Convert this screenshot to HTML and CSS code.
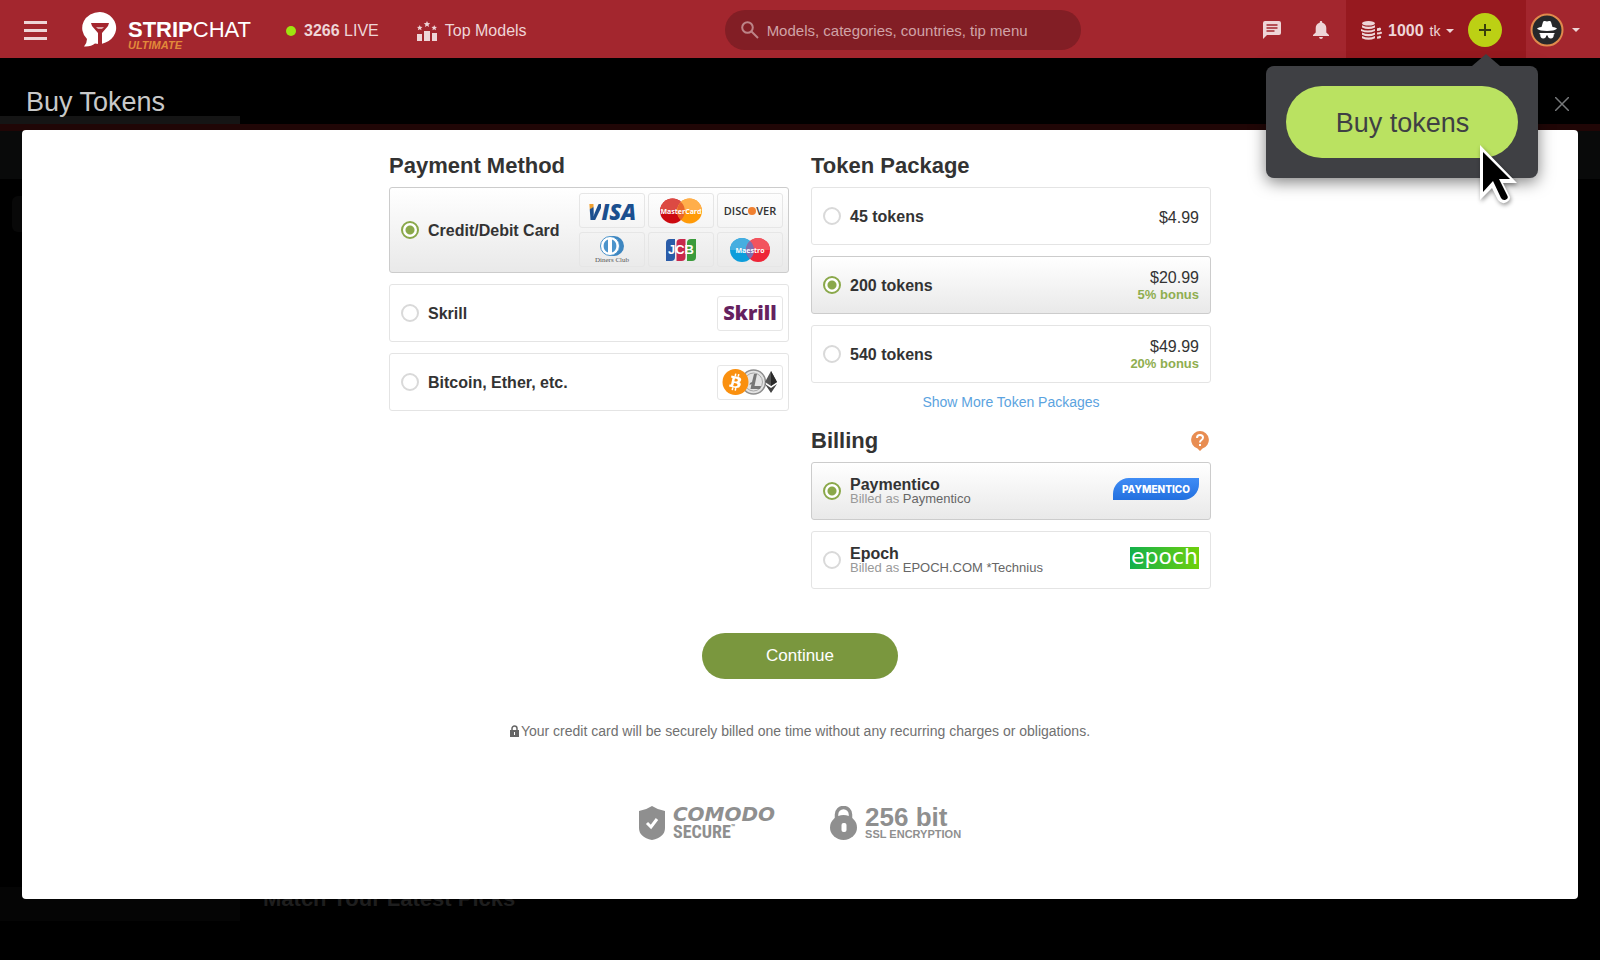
FILE: index.html
```html
<!DOCTYPE html>
<html lang="en">
<head>
	<meta charset="UTF-8">
	<title>Buy Tokens</title>
	<link rel="stylesheet" href="styles.css">
</head>
<body>
	<header class="header">
		<button type="button" class="menu-btn" aria-label="Menu"><span></span><span></span><span></span></button>
		<a href="#" class="logo">
			<svg width="36" height="36" viewBox="0 0 36 36">
				<path d="M18 1a17.500 16 0 1 1-5 31.600Q9 36 2 35.500Q5 32 5 28A17.500 16 0 0 1 18 1z" fill="#fff"/>
				<path d="M9 12h18l-1 3-6 7v11h-4V22l-6-7z" fill="#a3262e"/>
				<path d="M14 16h8l-2 2h-4z" fill="#dba5a8"/>
			</svg>
			<span class="logo-text">
				<span class="logo-name"><b>STRIP</b>CHAT</span>
				<em>ULTIMATE</em>
			</span>
		</a>
		<a href="#" class="live"><i class="dot"></i><span><b>3266</b> LIVE</span></a>
		<a href="#" class="top-models">
			<svg width="20" height="20" viewBox="0 0 20 20" fill="currentColor">
				<path d="M0 13h5v7H0zM7 10h6v10H7zM15 12h5v8h-5z"/>
				<path d="M10 0l.9 2.100 2.300.2-1.700 1.500.5 2.200-2-1.200-2 1.200.5-2.200-1.700-1.500 2.300-.2zM2.700 4l.8 1.800 2 .2-1.500 1.300.5 2-1.800-1-1.800 1 .5-2L0 6l2-.2zM17.200 4l.8 1.800 2 .2-1.500 1.300.5 2-1.800-1-1.800 1 .5-2L14.500 6l2-.2z"/>
			</svg>
			Top Models
		</a>
		<label class="search">
			<svg width="18" height="18" viewBox="0 0 18 18" fill="none" stroke="currentColor" stroke-width="2"><circle cx="6.500" cy="6.500" r="5.300"/><path d="M10.500 10.500l6.500 6.500"/></svg>
			<input type="text" placeholder="Models, categories, countries, tip menu" aria-label="Search">
		</label>
		<div class="tools">
			<button type="button" aria-label="Messages">
				<svg width="18" height="18" viewBox="0 0 18 18"><path d="M2 0h14q2 0 2 2v10q0 2-2 2H4l-4 4V2q0-2 2-2z" fill="currentColor"/><path d="M3.500 4h11M3.500 7h11M3.500 10h8" stroke="#a3262e" stroke-width="1.400"/></svg>
			</button>
			<button type="button" aria-label="Notifications">
				<svg width="16" height="18" viewBox="0 0 16 18" fill="currentColor"><path d="M8 0c1 0 1.300.7 1.300 1.700C12 2.300 13.300 4.500 13.300 7v4.500L16 14v1H0v-1l2.700-2.500V7c0-2.500 1.300-4.700 4-5.300C6.700.700 7 0 8 0zM6 16h4q-.3 2-2 2t-2-2z"/></svg>
			</button>
		</div>
		<div class="balance">
			<button type="button" class="amount">
				<svg width="21" height="19" viewBox="0 0 21 19" fill="currentColor">
					<ellipse cx="7.500" cy="2.300" rx="6.500" ry="2.300"/>
					<path d="M1 4.300q6.500 3 13 0v2.200q-6.500 3-13 0zM0 7.900q6.500 3 14 0v2.200q-7 3-14 0zM1 11.500q6.500 3 13 0v2.200q-6.500 3-13 0zM1 15q6.500 3 13 0v2.200q-6.500 3.300-13 0z"/>
					<path d="M16 7.300q2 0 3-.8l1 1v1.500q-1 1-4 1zM16 11.500q3 0 4-1l1 1v1q-2 1-5 1zM16 15.500q2 0 3-1l1 1v1.200q-1 1-4 1z"/>
				</svg>
				<b>1000</b><span>tk</span><i class="caret"></i>
			</button>
			<div class="plus-wrap">
				<button type="button" class="plus" aria-label="Add tokens"><svg width="12" height="12" viewBox="0 0 12 12" stroke="#39400c" stroke-width="2"><path d="M6 0v12M0 6h12"/></svg></button>
				<div class="popover">
					<button type="button" class="buy-btn">Buy tokens</button>
					<svg class="cursor" width="42" height="64" viewBox="0 0 42 64">
						<path d="M3 2v55l12-12 6 12q4 5 9 2t2-7l-6-12h14z" fill="#fff"/>
						<path d="M6 9v40l10-11 8 17q2 3 5 1.500t1-4.500l-8-16h11z" fill="#000"/>
					</svg>
				</div>
			</div>
		</div>
		<button type="button" class="profile" aria-label="Profile">
			<svg width="34" height="34" viewBox="0 0 34 34">
				<circle cx="17" cy="17" r="15.500" fill="#26282a" stroke="#e08a4c" stroke-width="2"/>
				<path d="M11.500 14l1.500-5q.5-1.500 2-1l2 .5 2-.5q1.500-.5 2 1l1.500 5q4 .5 4.500 1.800-3 2.200-10 2.200T7 15.800q.5-1.300 4.500-1.800z" fill="#fff"/>
				<path d="M9.500 20h15v1.200h-.7q0 4.300-3 4.300-2.800 0-3.100-3h-1.400q-.3 3-3.100 3-3 0-3-4.300h-.7z" fill="#fff"/>
			</svg>
			<i class="caret"></i>
		</button>
	</header>

	<main class="stage">
		<!-- dimmed page behind the dialog -->
		<div class="behind">
			<div class="behind-side-top"></div>
			<div class="behind-red"></div>
			<div class="behind-bar"></div>
			<div class="behind-body">
				<div class="behind-tile"></div>
			</div>
			<div class="behind-feed">
				<div class="behind-side"></div>
				<h2>Match Your Latest Picks</h2>
			</div>
		</div>

		<div class="dialog-head">
			<h1>Buy Tokens</h1>
			<button type="button" class="close" aria-label="Close"><svg width="14" height="14" viewBox="0 0 14 14" stroke="#77797b" stroke-width="1.500"><path d="M0 0l14 14M14 0L0 14"/></svg></button>
		</div>

		<form class="dialog">
			<div class="columns">
				<section>
					<h2>Payment Method</h2>
					<div class="options">
						<label class="option with-logos">
							<input type="radio" name="method" checked>
							<span class="name">Credit/Debit Card</span>
							<span class="logos">
								<span class="brand visa"><span>V</span>ISA</span>
								<span class="brand">
									<svg width="44" height="26" viewBox="0 0 44 26">
										<circle cx="13.500" cy="13" r="12.500" fill="#cc0a10"/><circle cx="30.500" cy="13" r="12.500" fill="#ff9a08"/>
										<path d="M1 13a12.500 12.500 0 0 1 25 0z" fill="#dc4a43"/><path d="M18 13a12.500 12.500 0 0 1 25 0z" fill="#ffae4b"/>
										<path d="M22 4a12.500 12.500 0 0 1 0 18 12.500 12.500 0 0 1 0-18z" fill="#e8652c"/>
										<text x="22" y="16" class="mc-text">MasterCard</text>
									</svg>
								</span>
								<span class="brand discover">DISC<i></i>VER</span>
								<span class="brand diners">
									<svg width="24" height="20" viewBox="0 0 24 20">
										<path d="M10 0h4a10 10 0 0 1 0 20h-4z" fill="#3d86c0"/><circle cx="10" cy="10" r="9.500" fill="#fff" stroke="#4c94cb"/>
										<path d="M8 3.500a7 7 0 0 0 0 13zM12 3.500a7 7 0 0 1 0 13z" fill="#4c94cb"/>
									</svg>
									Diners Club
								</span>
								<span class="brand">
									<svg width="30" height="22" viewBox="0 0 30 22">
										<path d="M4 0h5v18q0 4-4 4H0V4q0-4 4-4z" fill="#2a5ca8"/><path d="M14.500 0h5v18q0 4-4 4h-5V4q0-4 4-4z" fill="#c8284c"/><path d="M25 0h5v18q0 4-4 4h-5V4q0-4 4-4z" fill="#3b9b3c"/>
										<text x="15" y="15" class="jcb-text">JCB</text>
									</svg>
								</span>
								<span class="brand">
									<svg width="40" height="24" viewBox="0 0 40 24">
										<circle cx="12" cy="12" r="12" fill="#0d9ddb"/><circle cx="28" cy="12" r="12" fill="#ee2638"/>
										<path d="M0 12a12 12 0 0 1 24 0z" fill="#46aee0"/><path d="M16 12a12 12 0 0 1 24 0z" fill="#f2545e"/>
										<path d="M20 3a12 12 0 0 1 0 18 12 12 0 0 1 0-18z" fill="#7e6fb0"/>
										<text x="20" y="15" class="mc-text">Maestro</text>
									</svg>
								</span>
							</span>
						</label>
						<label class="option with-logos">
							<input type="radio" name="method">
							<span class="name">Skrill</span>
							<span class="brand skrill">Skrill</span>
						</label>
						<label class="option with-logos">
							<input type="radio" name="method">
							<span class="name">Bitcoin, Ether, etc.</span>
							<span class="brand">
								<svg width="56" height="28" viewBox="0 0 56 28">
									<circle cx="31.500" cy="14" r="12" fill="#e4e4e4" stroke="#8f8f8f" stroke-width="1.500"/>
									<circle cx="31.500" cy="14" r="9" fill="none" stroke="#a8a8a8"/>
									<path d="M32 6h3l-2.500 12H39l-1 3H28.500l1-5-2 1 .5-2 2-1z" fill="#777"/>
									<circle cx="13.500" cy="14" r="13" fill="#fa900f"/>
									<path d="M9.500 7.500l7 1.500q3.500 1 2.500 3.500-.5 1.500-2 1.500 2.500 1 1.500 3.500-1 3-5 2.500l-6.500-1.500.5-2h1.500l1.500-6.500-1.500-.5zM13 10.500l-.7 2.700q3 1 3.500-.7t-2.800-2zM12 15l-.8 3q3.800 1 4.300-.8T12 15zM13 5.500l1.500.3-.5 2.500-1.500-.3zM16 6l1.500.3-.5 2.500-1.500-.3zM10 19.500l1.500.3-.5 2.500-1.500-.3zM13 20l1.500.3-.5 2.500-1.500-.3z" fill="#fff"/>
									<path d="M49 3l6 11-6 4-6-4z" fill="#555"/><path d="M49 3v15l6-4z" fill="#2a2a2a"/><path d="M43 16l6 4 6-4-6 9z" fill="#444"/>
								</svg>
							</span>
						</label>
					</div>
				</section>

				<div>
					<section>
						<h2>Token Package</h2>
						<div class="options">
							<label class="option">
								<input type="radio" name="package">
								<span class="name">45 tokens</span>
								<span class="price">$4.99</span>
							</label>
							<label class="option">
								<input type="radio" name="package" checked>
								<span class="name">200 tokens</span>
								<span class="price">$20.99<b>5% bonus</b></span>
							</label>
							<label class="option">
								<input type="radio" name="package">
								<span class="name">540 tokens</span>
								<span class="price">$49.99<b>20% bonus</b></span>
							</label>
						</div>
						<a href="#" class="more">Show More Token Packages</a>
					</section>
					<section>
						<h2>Billing
							<svg class="help" width="18" height="20" viewBox="0 0 18 20"><path d="M9 0a9 9 0 0 1 2.500 17.600L9 20l-2.500-2.400A9 9 0 0 1 9 0z" fill="#e88d52"/><path d="M6 7q0-3 3-3t3 2.500q0 1.500-1.500 2.500T9 11.500M9 13v2" fill="none" stroke="#fff" stroke-width="2"/></svg>
						</h2>
						<div class="options">
							<label class="option">
								<input type="radio" name="billing" checked>
								<span class="name">Paymentico<small>Billed as <span>Paymentico</span></small></span>
								<span class="paymentico">PAYMENTICO</span>
							</label>
							<label class="option">
								<input type="radio" name="billing">
								<span class="name">Epoch<small>Billed as <span>EPOCH.COM *Technius</span></small></span>
								<span class="epoch">epoch</span>
							</label>
						</div>
					</section>
				</div>
			</div>

			<button type="button" class="continue">Continue</button>

			<p class="notice">
				<svg width="9" height="12" viewBox="0 0 9 12"><path d="M2 5V3.500a2.500 2.500 0 0 1 5 0V5" fill="none" stroke="#666" stroke-width="1.500"/><path d="M0 5h9v7H0z" fill="#666"/><path d="M4 7h1v3H4z" fill="#fff"/></svg>
				Your credit card will be securely billed one time without any recurring charges or obligations.
			</p>

			<div class="badges">
				<div class="badge">
					<svg width="26" height="34" viewBox="0 0 26 34"><path d="M13 0q6 4 13 5v17q0 9-13 12Q0 31 0 22V5q7-1 13-5z" fill="#8f8f8f"/><path d="M8 17l4 4 6-8" fill="none" stroke="#fff" stroke-width="3"/></svg>
					<div class="comodo"><i>COMODO</i><b>SECURE<small>™</small></b></div>
				</div>
				<div class="badge">
					<svg width="27" height="34" viewBox="0 0 27 34"><path d="M6.500 14V8.500a7 7 0 0 1 14 0V14" fill="none" stroke="#8f8f8f" stroke-width="3.500"/><ellipse cx="13.500" cy="21.500" rx="13.500" ry="12.500" fill="#8f8f8f"/><rect x="11.500" y="17" width="5" height="9" rx="2" fill="#fff"/></svg>
					<div class="ssl"><b>256 bit</b><span>SSL ENCRYPTION</span></div>
				</div>
			</div>
		</form>
	</main>
</body>
</html>
```

FILE: styles.css
```css
*{margin: 0;padding: 0;box-sizing: border-box;}
body{
	min-height: 100vh;
	display: flex;
	flex-direction: column;
	background: #000;
	font-family: "Liberation Sans", Arial, sans-serif;
	font-size: 16px;
	color: #333;
}
button{border: 0;background: none;font: inherit;color: inherit;cursor: pointer;}
a{color: inherit;text-decoration: none;}
svg{display: block;flex: none;}

/* header */
.header{position: relative;z-index: 2;display: flex;align-items: stretch;height: 58px;padding-left: 24px;background: #a3262e;color: #eed5d7;white-space: nowrap;}
.menu-btn{display: flex;flex-direction: column;justify-content: center;gap: 5px;width: 23px;padding-top: 2px;}
.menu-btn span{height: 3px;background: #eed5d7;}
.logo{display: flex;align-items: center;gap: 10px;margin-left: 35px;}
.logo-text{display: flex;flex-direction: column;padding-top: 12px;color: #fff;}
.logo-name{font-size: 22px;line-height: 20px;}
.logo em{font-size: 11px;line-height: 10px;font-weight: bold;color: #e28a3a;}
.live{display: flex;align-items: center;gap: 8px;margin-left: 35px;padding-top: 3px;}
.dot{width: 10px;height: 10px;border-radius: 50%;background: #9fe310;}
.top-models{display: flex;align-items: center;gap: 8px;margin-left: 38px;padding-top: 3px;}
.search{display: flex;align-items: center;gap: 8px;width: 356px;height: 40px;margin: 10px 0 0 198px;padding: 0 16px;border-radius: 20px;background: #821e25;color: #bd8488;}
.search input{flex: 1;min-width: 0;border: 0;outline: 0;background: none;font: inherit;font-size: 15px;color: #d9b0b3;}
.search input::placeholder{color: #d0a3a7;opacity: 1;}
.tools{display: flex;align-items: center;gap: 32px;margin-left: auto;padding-right: 17px;padding-top: 2px;}
.balance{display: flex;align-items: center;gap: 14px;width: 180px;padding-left: 15px;background: #96191f;}
.amount{display: flex;align-items: center;gap: 6px;padding-top: 3px;}
.amount span{font-size: 14px;}
.caret{width: 0;height: 0;border: 4px solid transparent;border-top-color: currentColor;border-bottom: 0;}
.plus-wrap{position: relative;}
.plus{display: flex;align-items: center;justify-content: center;width: 34px;height: 34px;margin-top: 2px;border-radius: 50%;background: #bcd014;}
.profile{display: flex;align-items: center;gap: 8px;padding: 2px 20px 0 4px;}

/* popover under the plus button */
.popover{position: absolute;top: 55px;right: -36px;width: 272px;padding: 20px;border-radius: 8px;background: #3f4044;box-shadow: 0 4px 16px rgba(0,0,0,.5);}
.popover::before{content: "";position: absolute;right: 38px;bottom: 100%;border: 14px solid transparent;border-top: 0;border-bottom: 12px solid #3f4044;}
.buy-btn{width: 100%;height: 72px;padding-top: 2px;border-radius: 36px;background: #bae261;font-size: 27px;color: #3f4044;}
.cursor{position: absolute;top: 77px;right: 19px;filter: drop-shadow(1px 2px 2px rgba(0,0,0,.4));}

/* page behind */
.stage{position: relative;flex: 1;padding: 0 22px 61px;}
.behind{position: absolute;inset: 0;z-index: -1;display: flex;flex-direction: column;padding-top: 58px;}
.behind-side-top{width: 15%;height: 8px;background: #151515;}
.behind-red{height: 7px;background: #200606;}
.behind-bar{height: 48px;background: #090a0a;}
.behind-body{flex: 1;padding: 17px 12px;}
.behind-tile{width: 200px;height: 36px;border-radius: 6px;background: #080808;}
.behind-feed{display: flex;gap: 23px;height: 34px;margin-bottom: 39px;}
.behind-side{width: 15%;background: #050505;}
.behind-feed h2{font-size: 22px;line-height: 24px;color: #1e1e1e;}

/* dialog */
.dialog-head{display: flex;align-items: center;justify-content: space-between;height: 72px;padding: 15px 9px 0 4px;}
.dialog-head h1{font-size: 27px;font-weight: normal;line-height: 28px;color: #c8c8c8;}
.close{padding-top: 4px;}
.dialog{display: flex;flex-direction: column;align-items: center;padding: 23px 20px 59px;border-radius: 4px;background: #fff;}
.columns{display: grid;grid-template-columns: 400px 400px;gap: 22px;}
.dialog h2{display: flex;align-items: center;justify-content: space-between;margin-bottom: 8px;padding-right: 2px;font-size: 22px;line-height: 26px;}
.options{display: flex;flex-direction: column;gap: 11px;}
.option{display: flex;align-items: center;min-height: 58px;padding: 0 11px;border: 1px solid #e4e4e4;border-radius: 3px;}
.option:has(:checked){border-color: #ccc;background: linear-gradient(#fff, #e9e9e9);}
.with-logos{padding: 5px 5px 5px 11px;}
.option input{appearance: none;flex: none;width: 18px;height: 18px;border: 2px solid #d9d9d9;border-radius: 50%;background: #fff;}
.option input:checked{border-color: #8aa84a;background: radial-gradient(#8aa84a 4px, #fff 5px);}
.name{flex: 1;padding: 1px 0 0 9px;font-weight: bold;line-height: 14px;}
.name small{display: block;font-size: 13px;font-weight: normal;color: #999;}
.name small span{color: #666;}
.price{padding-top: 2px;text-align: right;line-height: 17px;}
.price b{display: block;font-size: 13px;color: #8fae50;}
.more{display: block;margin: 9px 0 16px;text-align: center;font-size: 14px;line-height: 20px;color: #5ba3e0;}
.logos{display: grid;grid-template-columns: repeat(3, 66px);gap: 4px 3px;}
.brand{display: flex;align-items: center;justify-content: center;width: 66px;height: 35px;border: 1px solid #e6e6e6;border-radius: 3px;}
.visa{font: italic 800 22px "Open Sans", sans-serif;color: #1b4f8f;}
.visa span{background: linear-gradient(150deg, #f0a030 36%, #1b4f8f 40%);background-clip: text;color: transparent;}
.discover{font: 600 11px "Open Sans", sans-serif;color: #333;}
.discover i{width: 8px;height: 8px;border-radius: 50%;background: #f08030;}
.diners{flex-direction: column;font: 7px "Liberation Serif", serif;color: #555;}
.mc-text{font: bold 7px "Open Sans", sans-serif;fill: #fff;text-anchor: middle;}
.jcb-text{font: bold 13px "Liberation Sans", sans-serif;fill: #fff;text-anchor: middle;}
.skrill{padding-bottom: 2px;font: 800 20px "Open Sans", sans-serif;color: #65215f;}
.paymentico{margin-bottom: 4px;padding: 0 9px;border-radius: 16px 0 16px 0;background: linear-gradient(#3f8cf5, #2370df);font: 800 10px/22px Inter, sans-serif;color: #fff;}
.epoch{height: 22px;margin-bottom: 4px;padding: 0 1px;background: linear-gradient(90deg, #12b04c, #6fd00a);font: 22px/20px "DejaVu Sans", sans-serif;color: #fff;}

.continue{width: 196px;height: 46px;margin-top: 44px;border-radius: 23px;background: #7a973e;font-size: 17px;color: #fff;}
.notice{display: flex;align-items: center;gap: 2px;margin-top: 42px;font-size: 14px;line-height: 20px;color: #707070;}
.badges{display: flex;gap: 55px;margin-top: 65px;color: #8f8f8f;}
.badge{display: flex;align-items: center;gap: 8px;}
.comodo, .ssl{display: flex;flex-direction: column;}
.comodo i{font: italic bold 20px/17px "DejaVu Sans", sans-serif;}
.comodo b{display: flex;font: bold 18px/17px "Liberation Sans Narrow", "Roboto Condensed", Roboto, sans-serif;}
.comodo small{font-size: 8px;line-height: 10px;}
.ssl b{font-size: 26px;line-height: 22px;}
.ssl span{font-size: 11px;line-height: 12px;font-weight: bold;}
```
